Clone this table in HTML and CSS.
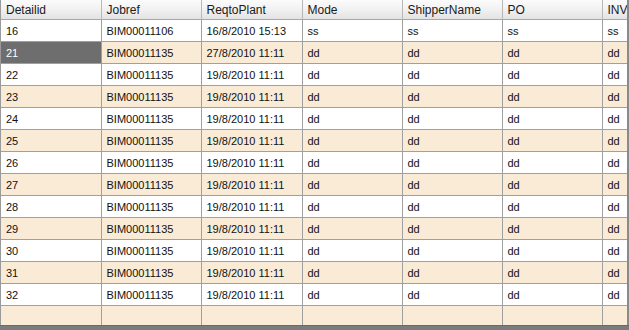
FILE: index.html
```html
<!DOCTYPE html>
<html>
<head>
<meta charset="utf-8">
<link rel="stylesheet" href="styles.css">
</head>
<body>
<div class="frame">
  <div class="view">
    <table class="grid">
      <colgroup>
        <col class="c1"><col class="c2"><col class="c3"><col class="c4"><col class="c5"><col class="c6"><col class="c7">
      </colgroup>
      <thead>
        <tr><th>Detailid</th><th>Jobref</th><th>ReqtoPlant</th><th>Mode</th><th>ShipperName</th><th>PO</th><th>INV</th></tr>
      </thead>
      <tbody>
        <tr><td>16</td><td>BIM00011106</td><td>16/8/2010 15:13</td><td>ss</td><td>ss</td><td>ss</td><td>ss</td></tr>
        <tr class="alt"><td class="sel">21</td><td>BIM00011135</td><td>27/8/2010 11:11</td><td>dd</td><td>dd</td><td>dd</td><td>dd</td></tr>
        <tr><td>22</td><td>BIM00011135</td><td>19/8/2010 11:11</td><td>dd</td><td>dd</td><td>dd</td><td>dd</td></tr>
        <tr class="alt"><td>23</td><td>BIM00011135</td><td>19/8/2010 11:11</td><td>dd</td><td>dd</td><td>dd</td><td>dd</td></tr>
        <tr><td>24</td><td>BIM00011135</td><td>19/8/2010 11:11</td><td>dd</td><td>dd</td><td>dd</td><td>dd</td></tr>
        <tr class="alt"><td>25</td><td>BIM00011135</td><td>19/8/2010 11:11</td><td>dd</td><td>dd</td><td>dd</td><td>dd</td></tr>
        <tr><td>26</td><td>BIM00011135</td><td>19/8/2010 11:11</td><td>dd</td><td>dd</td><td>dd</td><td>dd</td></tr>
        <tr class="alt"><td>27</td><td>BIM00011135</td><td>19/8/2010 11:11</td><td>dd</td><td>dd</td><td>dd</td><td>dd</td></tr>
        <tr><td>28</td><td>BIM00011135</td><td>19/8/2010 11:11</td><td>dd</td><td>dd</td><td>dd</td><td>dd</td></tr>
        <tr class="alt"><td>29</td><td>BIM00011135</td><td>19/8/2010 11:11</td><td>dd</td><td>dd</td><td>dd</td><td>dd</td></tr>
        <tr><td>30</td><td>BIM00011135</td><td>19/8/2010 11:11</td><td>dd</td><td>dd</td><td>dd</td><td>dd</td></tr>
        <tr class="alt"><td>31</td><td>BIM00011135</td><td>19/8/2010 11:11</td><td>dd</td><td>dd</td><td>dd</td><td>dd</td></tr>
        <tr><td>32</td><td>BIM00011135</td><td>19/8/2010 11:11</td><td>dd</td><td>dd</td><td>dd</td><td>dd</td></tr>
        <tr class="alt newrow"><td></td><td></td><td></td><td></td><td></td><td></td><td></td></tr>
      </tbody>
    </table>
  </div>
  <div class="band"></div>
</div>
</body>
</html>
```

FILE: styles.css
```css
html, body {
  margin: 0;
  padding: 0;
  background: #ffffff;
}
.frame {
  width: 629px;
  height: 330px;
  display: flex;
  flex-direction: column;
  overflow: hidden;
}
.view {
  height: 325px;
  overflow: hidden;
  border-left: 1px solid #9a9a9a;
  border-right: 2px solid #8a8a8a;
  box-sizing: border-box;
  background: #ffffff;
}
.band {
  height: 5px;
  background: #7c7c7c;
  border-top: 1px solid #6a6a6a;
  box-sizing: border-box;
}
.grid {
  border-collapse: collapse;
  table-layout: fixed;
  width: 640px;
  font-family: "Liberation Sans", Arial, sans-serif;
  font-size: 11px;
  color: #111111;
}
.c1 { width: 100px; }
.c2 { width: 100px; }
.c3 { width: 101px; }
.c4 { width: 100px; }
.c5 { width: 100px; }
.c6 { width: 100px; }
.c7 { width: 39px; }
.grid th {
  height: 19px;
  padding: 0 0 0 5px;
  text-align: left;
  font-weight: normal;
  font-size: 12px;
  color: #1a1a1a;
  background: linear-gradient(#fbfbfb, #f2f2f2 45%, #e3e3e3);
  border-right: 1px solid #b8b8b8;
  border-bottom: 1px solid #a8a8a8;
  white-space: nowrap;
  overflow: hidden;
}
.grid td {
  height: 21px;
  padding: 0 0 0 5px;
  border: 1px solid #a0a0a0;
  border-top: none;
  border-left: none;
  white-space: nowrap;
  overflow: hidden;
  background: #ffffff;
}
.grid tr.alt td {
  background: #faebd7;
}
.grid tr.alt td.sel {
  background: #6e6e6e;
  color: #ffffff;
}
```
